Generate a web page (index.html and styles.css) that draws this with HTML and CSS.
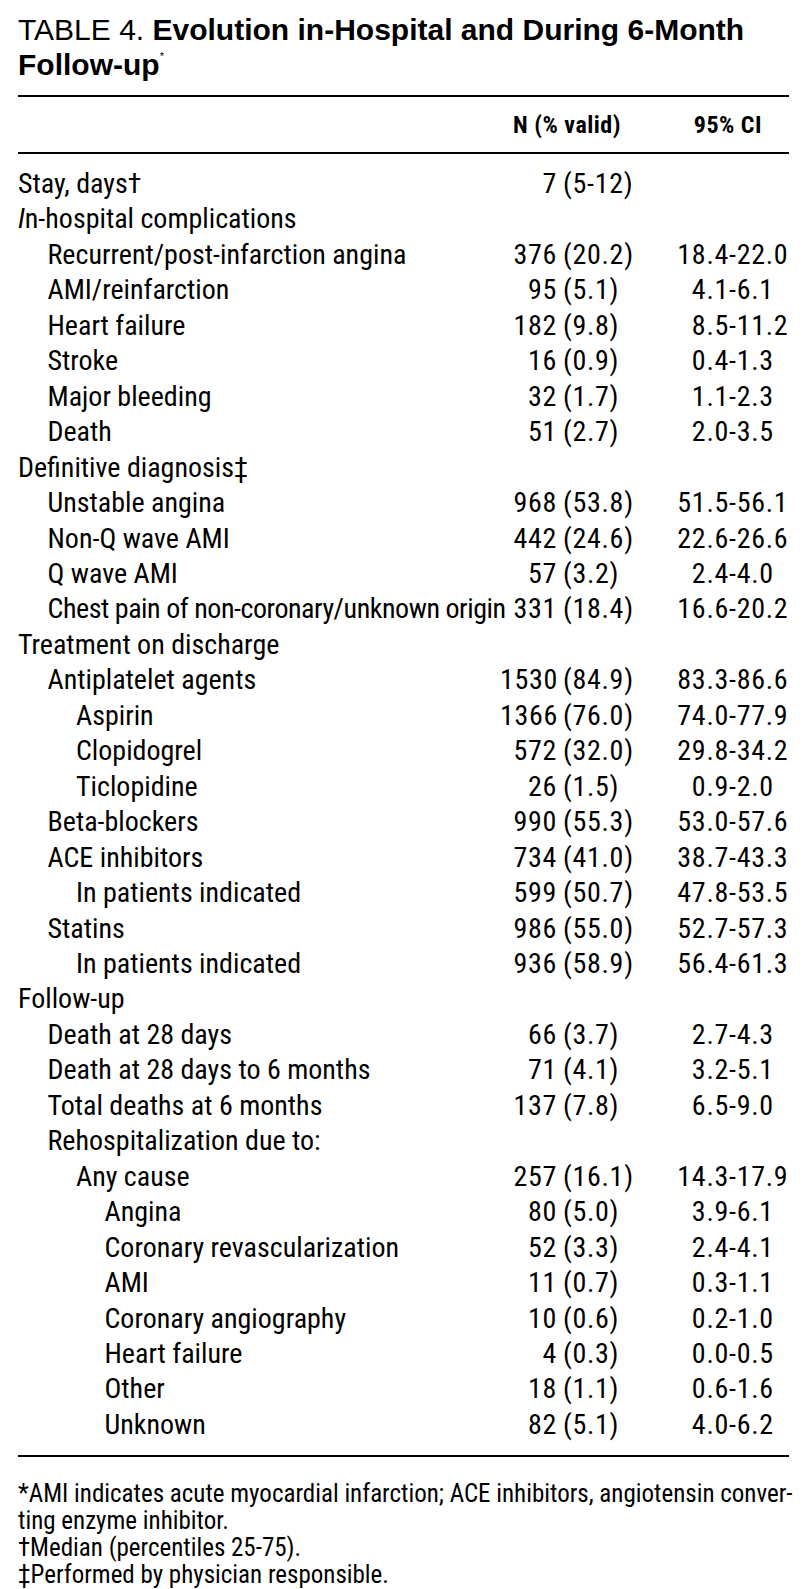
FILE: index.html
```html
<!DOCTYPE html>
<html lang="en">
<head>
<meta charset="utf-8">
<title>Table 4</title>
<link rel="stylesheet" href="styles.css">
</head>
<body>
<div class="page">
  <h1 class="title"><span class="lead">TABLE 4.</span> Evolution in-Hospital and During 6-Month Follow-up<sup>*</sup></h1>
  <table class="tbl">
    <colgroup>
      <col class="c-label"><col class="c-n"><col class="c-pct"><col class="c-lo"><col class="c-hi">
    </colgroup>
    <thead>
      <tr><th></th><th colspan="2" class="h-n">N (% valid)</th><th colspan="2" class="h-ci">95% CI</th></tr>
    </thead>
    <tbody>
      <tr><td class="l0">Stay, days†</td><td class="n">7</td><td class="p">(5-12)</td><td class="lo"></td><td class="hi"></td></tr>
      <tr><td class="l0"><i>I</i>n-hospital complications</td><td></td><td></td><td></td><td></td></tr>
      <tr><td class="l1">Recurrent/post-infarction angina</td><td class="n">376</td><td class="p">(20.2)</td><td class="lo">18.4</td><td class="hi">-22.0</td></tr>
      <tr><td class="l1">AMI/reinfarction</td><td class="n">95</td><td class="p">(5.1)</td><td class="lo">4.1</td><td class="hi">-6.1</td></tr>
      <tr><td class="l1">Heart failure</td><td class="n">182</td><td class="p">(9.8)</td><td class="lo">8.5</td><td class="hi">-11.2</td></tr>
      <tr><td class="l1">Stroke</td><td class="n">16</td><td class="p">(0.9)</td><td class="lo">0.4</td><td class="hi">-1.3</td></tr>
      <tr><td class="l1">Major bleeding</td><td class="n">32</td><td class="p">(1.7)</td><td class="lo">1.1</td><td class="hi">-2.3</td></tr>
      <tr><td class="l1">Death</td><td class="n">51</td><td class="p">(2.7)</td><td class="lo">2.0</td><td class="hi">-3.5</td></tr>
      <tr><td class="l0">Definitive diagnosis‡</td><td></td><td></td><td></td><td></td></tr>
      <tr><td class="l1">Unstable angina</td><td class="n">968</td><td class="p">(53.8)</td><td class="lo">51.5</td><td class="hi">-56.1</td></tr>
      <tr><td class="l1">Non-Q wave AMI</td><td class="n">442</td><td class="p">(24.6)</td><td class="lo">22.6</td><td class="hi">-26.6</td></tr>
      <tr><td class="l1">Q wave AMI</td><td class="n">57</td><td class="p">(3.2)</td><td class="lo">2.4</td><td class="hi">-4.0</td></tr>
      <tr><td class="l1 tight">Chest pain of non-coronary/unknown origin</td><td class="n">331</td><td class="p">(18.4)</td><td class="lo">16.6</td><td class="hi">-20.2</td></tr>
      <tr><td class="l0">Treatment on discharge</td><td></td><td></td><td></td><td></td></tr>
      <tr><td class="l1">Antiplatelet agents</td><td class="n">1530</td><td class="p">(84.9)</td><td class="lo">83.3</td><td class="hi">-86.6</td></tr>
      <tr><td class="l2">Aspirin</td><td class="n">1366</td><td class="p">(76.0)</td><td class="lo">74.0</td><td class="hi">-77.9</td></tr>
      <tr><td class="l2">Clopidogrel</td><td class="n">572</td><td class="p">(32.0)</td><td class="lo">29.8</td><td class="hi">-34.2</td></tr>
      <tr><td class="l2">Ticlopidine</td><td class="n">26</td><td class="p">(1.5)</td><td class="lo">0.9</td><td class="hi">-2.0</td></tr>
      <tr><td class="l1">Beta-blockers</td><td class="n">990</td><td class="p">(55.3)</td><td class="lo">53.0</td><td class="hi">-57.6</td></tr>
      <tr><td class="l1">ACE inhibitors</td><td class="n">734</td><td class="p">(41.0)</td><td class="lo">38.7</td><td class="hi">-43.3</td></tr>
      <tr><td class="l2">In patients indicated</td><td class="n">599</td><td class="p">(50.7)</td><td class="lo">47.8</td><td class="hi">-53.5</td></tr>
      <tr><td class="l1">Statins</td><td class="n">986</td><td class="p">(55.0)</td><td class="lo">52.7</td><td class="hi">-57.3</td></tr>
      <tr><td class="l2">In patients indicated</td><td class="n">936</td><td class="p">(58.9)</td><td class="lo">56.4</td><td class="hi">-61.3</td></tr>
      <tr><td class="l0">Follow-up</td><td></td><td></td><td></td><td></td></tr>
      <tr><td class="l1">Death at 28 days</td><td class="n">66</td><td class="p">(3.7)</td><td class="lo">2.7</td><td class="hi">-4.3</td></tr>
      <tr><td class="l1">Death at 28 days to 6 months</td><td class="n">71</td><td class="p">(4.1)</td><td class="lo">3.2</td><td class="hi">-5.1</td></tr>
      <tr><td class="l1">Total deaths at 6 months</td><td class="n">137</td><td class="p">(7.8)</td><td class="lo">6.5</td><td class="hi">-9.0</td></tr>
      <tr><td class="l1">Rehospitalization due to:</td><td></td><td></td><td></td><td></td></tr>
      <tr><td class="l2">Any cause</td><td class="n">257</td><td class="p">(16.1)</td><td class="lo">14.3</td><td class="hi">-17.9</td></tr>
      <tr><td class="l3">Angina</td><td class="n">80</td><td class="p">(5.0)</td><td class="lo">3.9</td><td class="hi">-6.1</td></tr>
      <tr><td class="l3">Coronary revascularization</td><td class="n">52</td><td class="p">(3.3)</td><td class="lo">2.4</td><td class="hi">-4.1</td></tr>
      <tr><td class="l3">AMI</td><td class="n">11</td><td class="p">(0.7)</td><td class="lo">0.3</td><td class="hi">-1.1</td></tr>
      <tr><td class="l3">Coronary angiography</td><td class="n">10</td><td class="p">(0.6)</td><td class="lo">0.2</td><td class="hi">-1.0</td></tr>
      <tr><td class="l3">Heart failure</td><td class="n">4</td><td class="p">(0.3)</td><td class="lo">0.0</td><td class="hi">-0.5</td></tr>
      <tr><td class="l3">Other</td><td class="n">18</td><td class="p">(1.1)</td><td class="lo">0.6</td><td class="hi">-1.6</td></tr>
      <tr><td class="l3">Unknown</td><td class="n">82</td><td class="p">(5.1)</td><td class="lo">4.0</td><td class="hi">-6.2</td></tr>
    </tbody>
  </table>
  <div class="notes">
    <p>*AMI indicates acute myocardial infarction; ACE inhibitors, angiotensin conver-<br>ting enzyme inhibitor.</p>
    <p>†Median (percentiles 25-75).</p>
    <p>‡Performed by physician responsible.</p>
  </div>
</div>
</body>
</html>
```
FILE: styles.css
```css
html, body {
  margin: 0;
  padding: 0;
  background: #fff;
  color: #000;
}

.page {
  padding: 13px 0 0 18px;
  width: 771px;
}

.title {
  margin: 0;
  font-family: "Liberation Sans", Arial, sans-serif;
  font-size: 30px;
  font-weight: bold;
  line-height: 34.5px;
}

.title .lead {
  font-weight: normal;
}

.title sup {
  font-size: 11px;
  font-weight: normal;
  vertical-align: 15px;
  line-height: 0;
}

.tbl {
  margin-top: 13px;
  width: 771px;
  table-layout: fixed;
  border-collapse: collapse;
  border-top: 2px solid #000;
  border-bottom: 2px solid #000;
  font-family: Roboto, "Liberation Sans", sans-serif;
  font-stretch: condensed;
}

.c-label { width: 482px; }
.c-n { width: 57px; }
.c-pct { width: 105px; }
.c-lo { width: 67px; }
.c-hi { width: 60px; }

.tbl thead tr {
  border-bottom: 2px solid #000;
}

.tbl th {
  height: 55px;
  padding: 0;
  font-size: 24px;
  font-weight: bold;
  letter-spacing: 0.5px;
  text-align: right;
  vertical-align: middle;
}

.tbl th.h-n { padding-right: 41px; }
.tbl th.h-ci { padding-right: 27px; }

.tbl td {
  padding: 0;
  font-size: 28px;
  font-weight: 380;
  line-height: 35.46px;
  white-space: nowrap;
  overflow: visible;
}

.tbl tbody tr:first-child td { padding-top: 12px; }
.tbl tbody tr:last-child td { padding-bottom: 13px; }

.tbl td.l0 { padding-left: 0; }
.tbl td.l1 { padding-left: 29.5px; }
.tbl td.l2 { padding-left: 58px; }
.tbl td.l3 { padding-left: 86.5px; }
.tbl td.tight { letter-spacing: -0.45px; }

.tbl td.n,
.tbl td.p,
.tbl td.lo,
.tbl td.hi { letter-spacing: 0.7px; }

.tbl td.n { text-align: right; }
.tbl td.p { text-align: left; padding-left: 6px; }
.tbl td.lo { text-align: right; }
.tbl td.hi { text-align: left; }

.notes {
  margin-top: 23px;
  font-family: Roboto, "Liberation Sans", sans-serif;
  font-stretch: condensed;
  font-size: 25px;
  font-weight: 380;
  line-height: 27px;
}

.notes p {
  margin: 0;
  white-space: nowrap;
}
```
